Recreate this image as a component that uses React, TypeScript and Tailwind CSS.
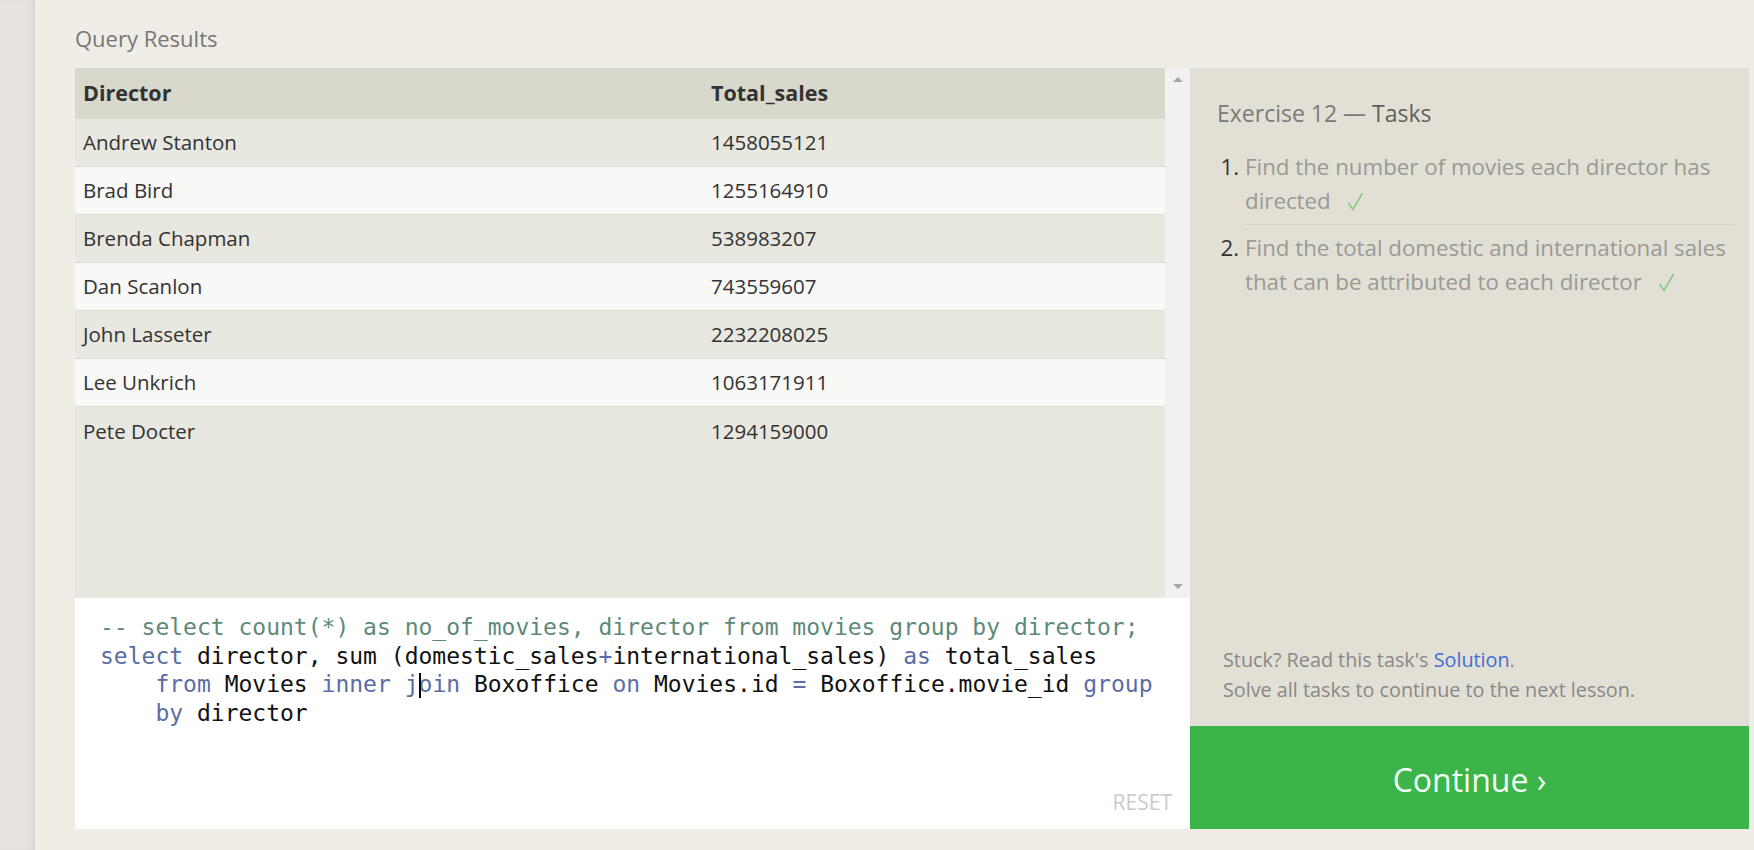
import React from "react";

const rows = [
  { director: "Andrew Stanton", total: "1458055121" },
  { director: "Brad Bird", total: "1255164910" },
  { director: "Brenda Chapman", total: "538983207" },
  { director: "Dan Scanlon", total: "743559607" },
  { director: "John Lasseter", total: "2232208025" },
  { director: "Lee Unkrich", total: "1063171911" },
  { director: "Pete Docter", total: "1294159000" },
];

const Kw = ({ children }: { children: React.ReactNode }) => (
  <span className="text-[#5a6da6]">{children}</span>
);

const ResultsTable = () => {
  return (
    <div className="flex h-[530px] bg-[#e8e7e0]">
      <div className="flex-1 text-[20.5px] text-[#333]">
        <div className="flex h-[51px] items-center bg-[#d9d8cd] text-[21.5px] font-bold">
          <div className="w-[628px] pl-[8px]">Director</div>
          <div className="pl-[8px]">Total_sales</div>
        </div>
        {rows.map((row, i) => (
          <div
            key={row.director}
            className={
              i === rows.length - 1
                ? "flex h-[48px] items-center bg-[#e8e7e0]"
                : i % 2 === 1
                  ? "flex h-[48px] items-center border-b border-[#dddbd4] bg-[#f8f8f7]"
                  : "flex h-[48px] items-center border-b border-[#dddbd4] bg-[#e8e7e0]"
            }
          >
            <div className="w-[628px] pl-[8px]">{row.director}</div>
            <div className="pl-[8px]">{row.total}</div>
          </div>
        ))}
      </div>
      <div className="flex w-[25px] flex-col items-center justify-between bg-[#f1f1f1] py-[9px]">
        <div className="h-0 w-0 border-x-[5px] border-b-[5px] border-x-transparent border-b-[#a6a6a6]" />
        <div className="h-0 w-0 border-x-[5px] border-t-[5px] border-x-transparent border-t-[#a6a6a6]" />
      </div>
    </div>
  );
};

const Editor = () => {
  return (
    <div className="relative flex-1 bg-white pl-[25px] pt-[15px]">
      <pre className="font-['DejaVu_Sans_Mono',monospace] text-[23px] leading-[28.5px] text-[#111]">
        <div className="text-[#5d8a78]">
          -- select count(*) as no_of_movies, director from movies group by director;
        </div>
        <div>
          <Kw>select</Kw> director, sum (domestic_sales<Kw>+</Kw>international_sales) <Kw>as</Kw> total_sales
        </div>
        <div>
          {"    "}
          <Kw>from</Kw> Movies <Kw>inner</Kw> <Kw>j</Kw>
          <span className="relative">
            <span className="absolute left-0 top-[2px] h-[25px] w-[2px] bg-black" />
          </span>
          <Kw>oin</Kw> Boxoffice <Kw>on</Kw> Movies.id <Kw>=</Kw> Boxoffice.movie_id <Kw>group</Kw>
        </div>
        <div>
          {"    "}
          <Kw>by</Kw> director
        </div>
      </pre>
      <div className="absolute bottom-[15px] right-[18px] text-[21px] leading-[24px] text-[#cbcbcb]">
        RESET
      </div>
    </div>
  );
};

const Check = () => (
  <svg className="ml-[16px] inline-block align-[-2px]" width="17" height="19" viewBox="0 0 17 19">
    <polyline points="1.5,11 6,17.5 15.5,1" fill="none" stroke="#86cc86" strokeWidth="1.6" />
  </svg>
);

const TaskPanel = () => {
  return (
    <div className="flex flex-1 flex-col bg-[#e2dfd5] pr-[14px]">
      <div className="pl-[27px] pt-[30px] text-[23px] leading-[30px] text-[#7a7a7a]">
        Exercise 12 — <span className="text-[#5f5f5f]">Tasks</span>
      </div>
      <ol className="mt-[22px] list-decimal pl-[55px] text-[22.3px] leading-[34px] text-[#9a9a96] marker:text-[#333]">
        <li className="whitespace-nowrap border-b border-[#d3d0c6] pb-[6px]">
          Find the number of movies each director has
          <br />
          directed
          <Check />
        </li>
        <li className="whitespace-nowrap pt-[6px]">
          Find the total domestic and international sales
          <br />
          that can be attributed to each director
          <Check />
        </li>
      </ol>
      <div className="mt-auto pb-[21px] pl-[33px] text-[19.8px] leading-[30px] text-[#888]">
        <div>
          Stuck? Read this task's <span className="text-[#3f6fd3]">Solution</span>.
        </div>
        <div>Solve all tasks to continue to the next lesson.</div>
      </div>
    </div>
  );
};

export default function App() {
  return (
    <div className="flex h-[850px] w-full overflow-hidden bg-[#efede6] font-['Open_Sans',sans-serif]">
      <div className="w-[35px] shrink-0 bg-[#e5e2df] shadow-[inset_-5px_0_6px_-3px_rgba(0,0,0,0.07)]" />
      <div className="flex flex-1 flex-col pl-[40px] pr-[5px]">
        <div className="h-[68px] pt-[23px] text-[22px] leading-[30px] text-[#777]">
          Query Results
        </div>
        <div className="grid h-[761px] grid-cols-[1115px_1fr]">
          <div className="flex flex-col">
            <ResultsTable />
            <Editor />
          </div>
          <div className="flex flex-col">
            <TaskPanel />
            <button className="flex h-[103px] items-center justify-center bg-[#3bb54a] pt-[4px] text-[32px] text-[#f3fff3]">
              Continue ›
            </button>
          </div>
        </div>
      </div>
    </div>
  );
}
